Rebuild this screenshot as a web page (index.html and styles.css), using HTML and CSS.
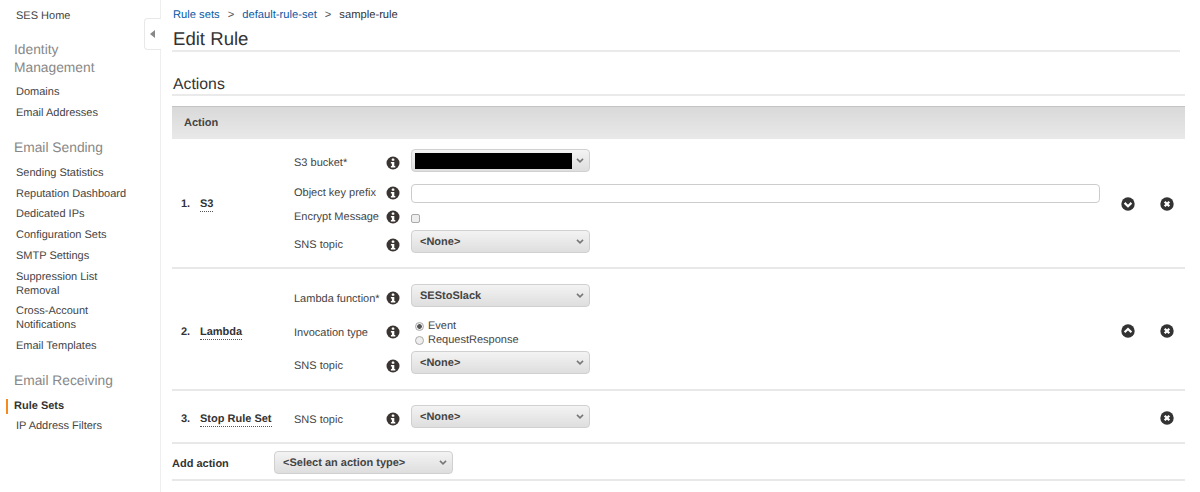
FILE: index.html
```html
<!DOCTYPE html>
<html lang="en">
<head>
<meta charset="utf-8">
<title>Edit Rule</title>
<link rel="stylesheet" href="styles.css">
</head>
<body>
<svg class="defs" width="0" height="0">
  <symbol id="info" viewBox="0 0 14 14"><circle cx="7" cy="7" r="6.5" fill="#3a3532"/><rect x="5.8" y="2.6" width="2.5" height="2.2" rx=".6" fill="#fff"/><path d="M4.9 6h3.4v3.9h1v1.5H4.9V9.9h1V7.4h-1z" fill="#fff"/></symbol>
  <symbol id="down" viewBox="0 0 14 14"><circle cx="7" cy="7" r="6.7" fill="#333"/><path d="M3.6 5.9 7 9.2l3.4-3.3" fill="none" stroke="#fff" stroke-width="2.2"/></symbol>
  <symbol id="up" viewBox="0 0 14 14"><circle cx="7" cy="7" r="6.7" fill="#333"/><path d="M3.6 8.3 7 5l3.4 3.3" fill="none" stroke="#fff" stroke-width="2.2"/></symbol>
  <symbol id="close" viewBox="0 0 14 14"><circle cx="7" cy="7" r="6.7" fill="#333"/><path d="M4.7 4.7l4.6 4.6M9.3 4.7 4.7 9.3" fill="none" stroke="#fff" stroke-width="2.3"/></symbol>
  <symbol id="caret" viewBox="0 0 10 6"><path d="M1.2 1 5 4.6 8.8 1" fill="none" stroke="#777" stroke-width="2"/></symbol>
</svg>
<div class="page">
  <nav class="sidebar">
    <a class="nav-link home">SES Home</a>
    <h3 class="nav-title identity">Identity Management</h3>
    <a class="nav-link">Domains</a>
    <a class="nav-link">Email Addresses</a>
    <h3 class="nav-title">Email Sending</h3>
    <a class="nav-link">Sending Statistics</a>
    <a class="nav-link">Reputation Dashboard</a>
    <a class="nav-link">Dedicated IPs</a>
    <a class="nav-link">Configuration Sets</a>
    <a class="nav-link">SMTP Settings</a>
    <a class="nav-link">Suppression List Removal</a>
    <a class="nav-link">Cross-Account Notifications</a>
    <a class="nav-link">Email Templates</a>
    <h3 class="nav-title">Email Receiving</h3>
    <a class="nav-link active">Rule Sets</a>
    <a class="nav-link">IP Address Filters</a>
    <div class="collapse"><span class="collapse-arrow"></span></div>
  </nav>
  <main class="main">
    <div class="crumbs"><a>Rule sets</a><span>&gt;</span><a>default-rule-set</a><span>&gt;</span><b>sample-rule</b></div>
    <h1 class="title">Edit Rule</h1>
    <h2 class="section">Actions</h2>
    <div class="thead">Action</div>

    <section class="action a1">
      <div class="num">1.</div>
      <div class="name"><span>S3</span></div>
      <div class="fields">
        <div class="field f-bucket"><label>S3 bucket*</label><svg class="ico"><use href="#info"/></svg><div class="select"><span class="redacted"></span><svg class="caret"><use href="#caret"/></svg></div></div>
        <div class="field f-key"><label>Object key prefix</label><svg class="ico"><use href="#info"/></svg><div class="input"></div></div>
        <div class="field f-enc"><label>Encrypt Message</label><svg class="ico"><use href="#info"/></svg><span class="check"></span></div>
        <div class="field f-sns"><label>SNS topic</label><svg class="ico"><use href="#info"/></svg><div class="select"><b>&lt;None&gt;</b><svg class="caret"><use href="#caret"/></svg></div></div>
      </div>
      <svg class="btn move"><use href="#down"/></svg>
      <svg class="btn del"><use href="#close"/></svg>
    </section>

    <section class="action a2">
      <div class="num">2.</div>
      <div class="name"><span>Lambda</span></div>
      <div class="fields">
        <div class="field"><label>Lambda function*</label><svg class="ico"><use href="#info"/></svg><div class="select"><b>SEStoSlack</b><svg class="caret"><use href="#caret"/></svg></div></div>
        <div class="field f-inv"><label>Invocation type</label><svg class="ico"><use href="#info"/></svg>
          <div class="radios">
            <div class="radio-row"><span class="radio on"></span>Event</div>
            <div class="radio-row"><span class="radio"></span>RequestResponse</div>
          </div>
        </div>
        <div class="field f-sns"><label>SNS topic</label><svg class="ico"><use href="#info"/></svg><div class="select"><b>&lt;None&gt;</b><svg class="caret"><use href="#caret"/></svg></div></div>
      </div>
      <svg class="btn move"><use href="#up"/></svg>
      <svg class="btn del"><use href="#close"/></svg>
    </section>

    <section class="action a3">
      <div class="num">3.</div>
      <div class="name"><span>Stop Rule Set</span></div>
      <div class="fields">
        <div class="field"><label>SNS topic</label><svg class="ico"><use href="#info"/></svg><div class="select"><b>&lt;None&gt;</b><svg class="caret"><use href="#caret"/></svg></div></div>
      </div>
      <span class="move-empty"></span>
      <svg class="btn del"><use href="#close"/></svg>
    </section>

    <div class="add">
      <b class="add-label">Add action</b>
      <div class="select add-select"><b>&lt;Select an action type&gt;</b><svg class="caret"><use href="#caret"/></svg></div>
    </div>
  </main>
</div>
</body>
</html>
```
FILE: styles.css
```css
* { box-sizing: border-box; }
html, body { margin: 0; padding: 0; background: #fff; }
body {
  width: 1200px;
  height: 492px;
  overflow: hidden;
  font-family: "Liberation Sans", Arial, sans-serif;
  font-size: 11px;
  color: #444;
  text-rendering: geometricPrecision;
}
.defs { position: absolute; }
.page { display: flex; height: 492px; }

/* Sidebar */
.sidebar {
  position: relative;
  flex: 0 0 161px;
  height: 100%;
  border-right: 1px solid #eee;
  padding-top: 9px;
}
.nav-link {
  display: block;
  padding: 0 24px 0 16px;
  margin-bottom: 6.75px;
  line-height: 14px;
  color: #444;
}
.nav-title {
  margin: 19px 0 9px 14px;
  font-size: 13.8px;
  line-height: 18px;
  font-weight: 400;
  color: #888;
}
.nav-title.identity { margin: 18px 40px 8px 14px; }
.nav-link.home { margin-bottom: 0; }
.nav-link.active {
  font-weight: 700;
  height: 15px;
  padding-left: 6px;
  margin: 2px 0 4.75px 6px;
  border-left: 2.5px solid #f58a1f;
  color: #333;
}
.collapse {
  position: absolute;
  left: 144px;
  top: 18px;
  width: 17px;
  height: 32px;
  background: #fff;
  border: 1px solid #e8e8e8;
  border-right: 0;
  border-radius: 4px 0 0 4px;
  display: flex;
  align-items: center;
  padding-left: 5px;
}
.collapse-arrow {
  width: 0;
  height: 0;
  border-style: solid;
  border-width: 4.5px 5.5px 4.5px 0;
  border-color: transparent #888 transparent transparent;
}

/* Main */
.main { flex: 0 0 1013px; margin-left: 11px; }
.crumbs {
  display: flex;
  gap: 8px;
  height: 14px;
  margin-top: 8px;
  padding-left: 1px;
  font-size: 11.2px;
  line-height: 14px;
}
.crumbs a { color: #0b5aa5; }
.crumbs span { color: #555; }
.crumbs b { font-weight: 400; color: #333; }
.title {
  margin: 6px 5px 0 0;
  height: 24px;
  font-size: 18.6px;
  line-height: 22px;
  font-weight: 400;
  color: #333;
  text-indent: 1px;
  border-bottom: 2px solid #eaeaea;
}
.section {
  margin: 22px 0 0;
  height: 22px;
  font-size: 15.8px;
  line-height: 22px;
  font-weight: 400;
  color: #333;
  text-indent: 1px;
  border-bottom: 2px solid #eaeaea;
}
.thead {
  margin-top: 10px;
  height: 33px;
  padding-left: 12px;
  line-height: 33px;
  font-weight: 700;
  color: #444;
  background: linear-gradient(#d9d9d9, #e9e9e9);
  border-top: 1px solid #c4c4c4;
}

/* Action rows */
.action {
  display: flex;
  align-items: center;
  border-bottom: 2px solid #e8e8e8;
}
.a1 { height: 130px; }
.a1 .fields { padding-bottom: 4px; }
.a1 .num, .a1 .name, .a1 .btn { margin-top: 2px; }
.a2 { height: 122px; }
.a2 .num, .a2 .name { margin-top: 6px; }
.a2 .btn { margin-top: 4px; }
.a3 { height: 53px; }
.a3 .num, .a3 .name { margin-top: 4px; }
.a3 .btn { margin-top: 2px; }
.num { flex: 0 0 28px; padding-left: 9px; font-weight: 700; color: #333; }
.name { flex: 0 0 94px; font-weight: 700; color: #333; }
.name span { border-bottom: 1px dotted #555; padding-bottom: 1px; }
.fields { flex: 0 0 827px; }
.field { display: flex; align-items: center; }
.field label { flex: 0 0 92px; margin-top: 7px; color: #444; white-space: nowrap; }
.ico { flex: 0 0 14px; width: 14px; height: 14px; margin: 5px 11px 0 0; }
.select {
  display: flex;
  align-items: center;
  justify-content: space-between;
  flex: 0 0 179px;
  height: 23px;
  padding: 0 5px 0 8px;
  border: 1px solid #d0d0d0;
  border-radius: 4px;
  background: linear-gradient(#f3f3f3, #dedede);
}
.select b { font-weight: 700; color: #444; }
.caret { width: 8px; height: 5px; }
.redacted { width: 157px; height: 16px; margin-left: -5px; background: #000; }
.input {
  flex: 0 0 689px;
  height: 19px;
  border: 1px solid #ccc;
  border-radius: 4px;
  background: #fff;
}
.check {
  width: 9px;
  height: 9px;
  margin-top: 4px;
  border: 1px solid #aaa;
  border-radius: 2px;
  background: #eee;
}
.f-bucket label { margin-top: 5px; }
.f-key { margin-top: 12px; }
.f-key label, .f-key .ico { margin-top: -2px; }
.f-enc { margin-top: 3px; height: 20px; }
.f-enc label, .f-enc .ico { margin-top: 2px; }
.f-sns { margin-top: 4px; }
.f-sns .ico { margin-top: 7px; }
.f-inv { margin-top: 12px; margin-bottom: 2px; }
.f-inv label { margin-top: -1px; }
.f-inv .ico { margin-top: -2px; }
.radios { display: flex; flex-direction: column; }
.radio-row { display: flex; align-items: center; height: 14px; color: #444; line-height: 14px; }
.radio {
  width: 9px;
  height: 9px;
  margin: 0 4px;
  border: 1px solid #aaa;
  border-radius: 50%;
  background: #eee;
}
.radio.on { background: radial-gradient(circle, #555 0 2px, #eee 2.6px); }
.btn { flex: 0 0 14px; width: 14px; height: 14px; }
.move { margin-right: 25px; }
.move-empty { flex: 0 0 14px; margin-right: 25px; }

/* Add action */
.add {
  display: flex;
  align-items: center;
  height: 37px;
  border-bottom: 2px solid #e8e8e8;
}
.add-label { flex: 0 0 102px; color: #333; margin-top: 4px; }
.add-select { margin-top: 2px; }
```
